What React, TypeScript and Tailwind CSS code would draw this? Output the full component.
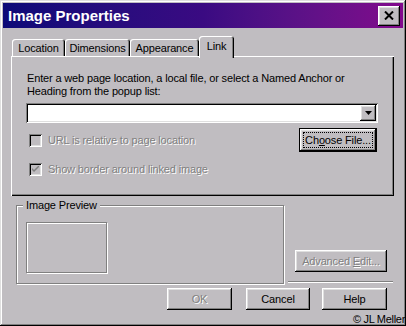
import React from "react";

const raised =
  "shadow-[inset_-1px_-1px_0_#000,inset_1px_1px_0_#fff,inset_-2px_-2px_0_#808080,inset_2px_2px_0_#dfdfdf]";
const sunken =
  "shadow-[inset_1px_1px_0_#808080,inset_-1px_-1px_0_#fff,inset_2px_2px_0_#000,inset_-2px_-2px_0_#dfdfdf]";
const disabledText = "text-[#808080] [text-shadow:1px_1px_0_#fff]";

function Tab({ label, width, active }: { label: string; width: string; active?: boolean }) {
  if (active) {
    return (
      <div
        className={`relative z-10 -mb-[2px] h-[22px] ${width} flex justify-center pt-[4px] rounded-t-[3px] bg-[#c0bdc1] shadow-[inset_1px_1px_0_#fff,inset_-1px_0_0_#000,inset_-2px_0_0_#808080]`}
      >
        {label}
      </div>
    );
  }
  return (
    <div
      className={`h-[17px] ${width} flex justify-center pt-[3px] rounded-t-[3px] shadow-[inset_1px_1px_0_#fff,inset_-1px_0_0_#000,inset_-2px_0_0_#808080]`}
    >
      {label}
    </div>
  );
}

function Checkbox({ checked }: { checked?: boolean }) {
  return (
    <div className={`w-[13px] h-[13px] flex items-center justify-center ${sunken}`}>
      {checked && (
        <svg width="7" height="7" viewBox="0 0 7 7">
          <path d="M0 2 L0 4 L2 6 L7 1 L7 -1 L2 4 Z" fill="#808080" />
        </svg>
      )}
    </div>
  );
}

export default function App() {
  return (
    <div className="relative w-[406px] h-[326px] overflow-hidden bg-[#c0bdc1] pt-[3px] font-['Liberation_Sans',Arial,sans-serif] text-[11px] leading-[13px] tracking-[-0.15px] text-black shadow-[inset_-1px_-1px_0_#000,inset_1px_1px_0_#dfdfdf,inset_-2px_-2px_0_#808080,inset_2px_2px_0_#fff]">
      {/* title bar */}
      <div className="mx-[3px] h-[25px] flex items-center pl-[5px] pr-[3px] bg-gradient-to-r from-[#0c0a78] via-[#3a0a82] to-[#82088c]">
        <span className="text-white font-bold text-[15px] tracking-normal">Image Properties</span>
        <div className={`ml-auto w-[22px] h-[20px] flex items-center justify-center bg-[#c0bdc1] ${raised}`}>
          <svg width="10" height="9" viewBox="0 0 10 9">
            <path d="M1 0.5 L9 8.5 M9 0.5 L1 8.5" stroke="#000" strokeWidth="2" />
          </svg>
        </div>
      </div>

      {/* tabs */}
      <div className="mt-[8px] h-[20px] pl-[12px] flex items-end">
        <Tab label="Location" width="w-[53px]" />
        <Tab label="Dimensions" width="w-[65px]" />
        <Tab label="Appearance" width="w-[69px]" />
        <Tab label="Link" width="w-[35px]" active />
      </div>

      {/* tab panel */}
      <div className="ml-[11px] w-[383px] h-[140px] pt-[16px] pl-[15px] shadow-[inset_1px_1px_0_#fff,inset_-1px_-1px_0_#000,inset_-2px_-2px_0_#808080]">
        <p className="pl-[1px]">
          Enter a web page location, a local file, or select a Named Anchor or
          <br />
          Heading from the popup list:
        </p>
        <div className={`mt-[5px] w-[352px] h-[20px] bg-white flex justify-end items-center pr-[2px] ${sunken}`}>
          <div className={`w-[16px] h-[16px] bg-[#c0bdc1] flex items-center justify-center ${raised}`}>
            <svg width="7" height="4" viewBox="0 0 7 4">
              <path d="M0 0 H7 L3.5 4 Z" fill="#000" />
            </svg>
          </div>
        </div>
        <div className="mt-[5px] w-[351px] flex items-center justify-between">
          <div className="flex items-center pl-[3px] gap-[6px]">
            <Checkbox />
            <span className={disabledText}>URL is relative to page location</span>
          </div>
          <div className="w-[78px] h-[24px] border border-black">
            <div className={`w-full h-full p-[3px] ${raised}`}>
              <div className="w-full h-full border border-dotted border-black flex items-center justify-center">
                Ch<span className="underline">o</span>ose File...
              </div>
            </div>
          </div>
        </div>
        <div className="mt-[11px] flex items-center pl-[3px] gap-[6px]">
          <Checkbox checked />
          <span className={disabledText}>Show border around linked image</span>
        </div>
      </div>

      {/* lower area */}
      <div className="mt-[9px] flex">
        <div className="relative ml-[16px] w-[268px] h-[79px] border border-[#808080] shadow-[inset_1px_1px_0_#fff,1px_1px_0_#fff]">
          <span className="absolute -top-[7px] left-[6px] px-[3px] bg-[#c0bdc1]">Image Preview</span>
          <div className="ml-[9px] mt-[16px] w-[81px] h-[51px] border border-[#808080] shadow-[1px_1px_0_#fff,inset_1px_1px_0_#fff]" />
        </div>
        <div className="ml-[4px] w-[105px]">
          <div className={`ml-[7px] mt-[45px] w-[92px] h-[22px] flex items-center justify-center ${raised} ${disabledText}`}>
            Advanced&nbsp;<span className="underline">E</span>dit...
          </div>
          <div className="mt-[9px] h-[2px] border-t border-[#808080] border-b border-b-white" />
        </div>
      </div>

      <div className="mt-[4px] flex">
        <div className={`ml-[167px] w-[65px] h-[22px] flex items-center justify-center ${raised} ${disabledText}`}>OK</div>
        <div className={`ml-[14px] w-[64px] h-[22px] flex items-center justify-center ${raised}`}>Cancel</div>
        <div className={`ml-[12px] w-[65px] h-[22px] flex items-center justify-center ${raised}`}>Help</div>
      </div>

      <span className="absolute right-[1px] bottom-[1px] text-[11px] leading-[11px] tracking-[-0.3px]">© JL Meller</span>
    </div>
  );
}
